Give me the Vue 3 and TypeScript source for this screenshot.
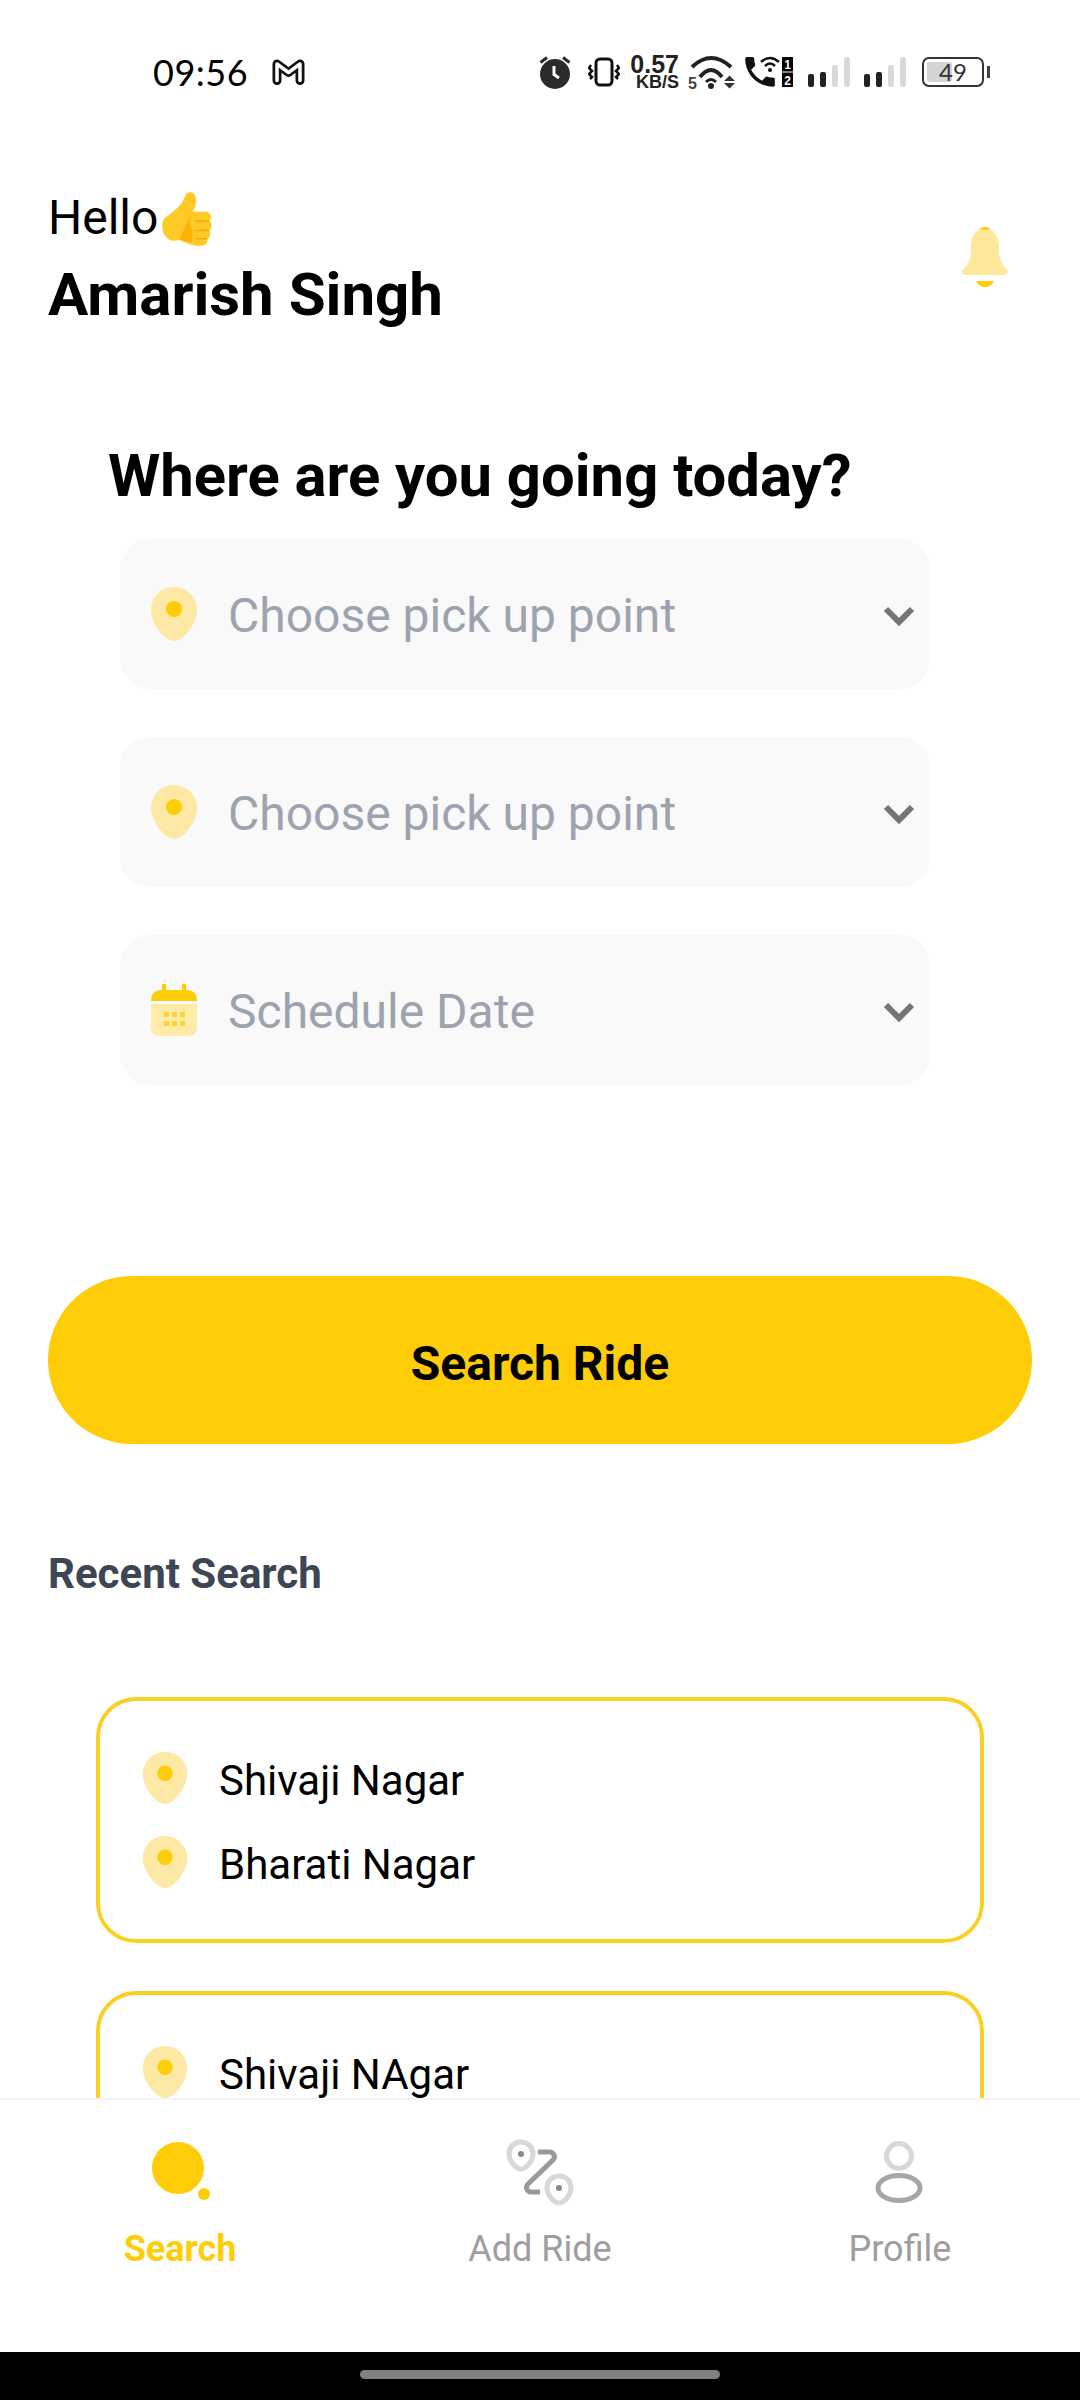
<template>
  <div class="screen">
    <div class="status-bar">
      <span class="time">09:56</span>
      <svg class="gmail" width="33" height="26" viewBox="0 0 33 26">
        <path d="M5 21.500V5L16.500 13.500 28 5V21.500" fill="none" stroke="#111" stroke-width="9" stroke-linejoin="round" stroke-linecap="round" />
        <path d="M5 21.500V5L16.500 13.500 28 5V21.500" fill="none" stroke="#fff" stroke-width="3.500" stroke-linejoin="round" stroke-linecap="round" />
      </svg>
      <div class="status-icons">
        <svg class="st-alarm" width="32" height="34" viewBox="0 0 32 34">
          <circle cx="16" cy="19" r="15" fill="#2b2b2b" />
          <path d="M1.500 7.500 8 2.500M30.500 7.500 24 2.500" stroke="#2b2b2b" stroke-width="3" />
          <path d="M15 11v8.500l5 3.500" fill="none" stroke="#fff" stroke-width="3" />
        </svg>
        <svg class="st-vibrate" width="32" height="30" viewBox="0 0 32 30">
          <rect x="8" y="2" width="16" height="26" rx="4" fill="none" stroke="#111" stroke-width="3" />
          <path d="M3 8 1 11l3 3-3 3 3 3-2 2M29 8l2 3-3 3 3 3-3 3 2 2" fill="none" stroke="#111" stroke-width="2.500" />
        </svg>
        <div class="st-speed">
          <span class="st-speed-val">0.57</span>
          <span class="st-speed-unit">KB/S</span>
        </div>
        <svg class="st-wifi" width="52" height="41" viewBox="-7 0 52 41">
          <path d="M2 12Q21-6 41 12M10 22Q21 8 32 22" fill="none" stroke="#222" stroke-width="4" />
          <path d="M16 27Q21 22 26 27" fill="none" stroke="#222" stroke-width="3" />
          <circle cx="21" cy="31" r="3" fill="#222" />
          <path d="M34 26l5.500-5.500L45 26zM34 28h11l-5.500 5.500z" fill="#333" />
          <text x="-2" y="34" class="st-wifi-five">5</text>
        </svg>
        <svg class="st-call" width="30" height="30" viewBox="3 3 18 18.200">
          <path d="M6.620 10.790c1.440 2.830 3.760 5.140 6.590 6.590l2.200-2.200c.27-.27.670-.36 1.020-.24 1.120.37 2.330.57 3.570.57.550 0 1 .45 1 1V20c0 .55-.45 1-1 1-9.390 0-17-7.610-17-17 0-.55.45-1 1-1h3.500c.55 0 1 .45 1 1 0 1.250.2 2.450.57 3.570.11.35.03.74-.25 1.020l-2.200 2.200z" fill="#111" />
        </svg>
        <svg class="st-callwifi" width="20" height="16" viewBox="0 0 20 16">
          <path d="M1 6Q10-2 19 6M5 10Q10 5 15 10" fill="none" stroke="#111" stroke-width="2.500" />
          <circle cx="10" cy="14" r="2" fill="#111" />
        </svg>
        <svg class="st-sim" width="11" height="30" viewBox="0 0 11 30">
          <rect width="11" height="14.500" fill="#000" />
          <rect y="15.500" width="11" height="14.500" fill="#000" />
          <text x="5.500" y="12" class="st-sim-num">1</text>
          <text x="5.500" y="27.500" class="st-sim-num">2</text>
        </svg>
        <div v-for="s in signalGroups" :key="s" class="st-signal" :class="'st-signal-' + s">
          <i v-for="(bar, i) in signalBars" :key="i" :class="{ off: i > 1 }" :style="{ height: bar + 'px' }"></i>
        </div>
        <div class="st-battery">
          <div class="st-battery-fill"></div>
          <span class="st-battery-val">49</span>
        </div>
        <div class="st-battery-nub"></div>
      </div>
    </div>

    <div class="content">
      <div class="greeting">
        <div>
          <div class="hello">
            Hello<svg class="thumb" width="52" height="56" viewBox="0 0 49 54">
              <path d="M3 26C10 21 20 14 23 4 24 0 32 0 33 6 34 12 32 17 30 20L43 20C48 21 49 26 46 29 49 31 49 36 46 38 48 41 47 45 44 46 45 50 42 53 38 53 30 53 23 50 17 47 10 50 3 46 1 38 0 32 1 28 3 26Z" fill="#FFCA28" />
              <path d="M30 20C27 27 27 34 30 38L29 50C25 49 21 48 17 47 21 38 26 28 30 20Z" fill="#FFB300" />
              <path d="M32 29H46M32 38H46M33 46H44" stroke="#F5A800" stroke-width="1.500" />
            </svg>
          </div>
          <div class="name">Amarish Singh</div>
        </div>
        <svg class="bell soft" width="46" height="62" viewBox="0 0 46 62">
          <path d="M23 3C11 3 9 13 9 24 9 34 6 39 0 45 0 47 2 49 4 49H42C44 49 46 47 46 45 40 39 37 34 37 24 37 13 35 3 23 3Z" fill="#FFE899" />
          <path d="M17 3Q23-1 29 3 23 5 17 3ZM14 55H32Q29 61 23 61 17 61 14 55Z" fill="#FFCD07" />
        </svg>
      </div>

      <h1 class="title">Where are you going today?</h1>

      <div class="form">
        <div v-for="field in fields" :key="field.id" class="field">
          <svg v-if="field.icon === 'pin'" class="field-icon soft" width="46" height="54" viewBox="0 0 46 54">
            <path d="M23 0C36 0 46 10 46 23 46 36 33 54 23 54 13 54 0 36 0 23 0 10 10 0 23 0Z" fill="#FDE9A5" />
            <circle cx="23" cy="22" r="8" fill="#FFCD07" />
          </svg>
          <svg v-else class="field-icon soft" width="46" height="54" viewBox="0 0 46 54">
            <path d="M0 21H46V44Q46 53 37 53H9Q0 53 0 44Z" fill="#FFEBA8" />
            <path d="M0 18Q0 7 11 7H11V1H15V7H31V1H35V7H35Q46 7 46 18Z" fill="#FFCD07" />
            <g fill="#FFD430">
              <rect x="13" y="29" width="5" height="5" />
              <rect x="21" y="29" width="5" height="5" />
              <rect x="29" y="29" width="5" height="5" />
              <rect x="13" y="38" width="5" height="5" />
              <rect x="21" y="38" width="5" height="5" />
              <rect x="29" y="38" width="5" height="5" />
            </g>
          </svg>
          <span class="field-text">{{ field.label }}</span>
          <svg class="chevron" width="32" height="20" viewBox="0 0 32 20">
            <path d="M3 3 16 16 29 3" fill="none" stroke="#757575" stroke-width="6" />
          </svg>
        </div>
      </div>

      <button class="search-btn">Search Ride</button>

      <h2 class="recent-title">Recent Search</h2>

      <div class="cards">
        <div v-for="(card, i) in recent" :key="i" class="card">
          <div v-for="place in card" :key="place" class="card-row">
            <svg class="card-pin soft" width="46" height="52" viewBox="0 0 46 54">
              <path d="M23 0C36 0 46 10 46 23 46 36 33 54 23 54 13 54 0 36 0 23 0 10 10 0 23 0Z" fill="#FDE9A5" />
              <circle cx="23" cy="22" r="8" fill="#FFCD07" />
            </svg>
            <span>{{ place }}</span>
          </div>
        </div>
      </div>
    </div>

    <nav class="tabs">
      <div class="tab active">
        <svg class="tab-icon" width="80" height="80" viewBox="0 0 80 80">
          <circle cx="38" cy="38" r="26" fill="#FFCD07" />
          <circle cx="64" cy="64" r="6" fill="#FFCD07" />
        </svg>
        <span>Search</span>
      </div>
      <div class="tab">
        <svg class="tab-icon soft" width="80" height="80" viewBox="0 0 80 80">
          <g transform="translate(-500 -2130)">
            <path d="M521 2142C528 2142 533 2147 533 2154 533 2161 526 2169 521 2169 516 2169 509 2161 509 2154 509 2147 514 2142 521 2142Z" fill="none" stroke="#d8d8d8" stroke-width="5" />
            <circle cx="521" cy="2154" r="3" fill="#888" />
            <path d="M559 2176C566 2176 571 2181 571 2188 571 2195 564 2203 559 2203 554 2203 547 2195 547 2188 547 2181 552 2176 559 2176Z" fill="none" stroke="#d8d8d8" stroke-width="5" />
            <circle cx="559" cy="2188" r="3" fill="#888" />
            <path d="M538 2152H549C554 2152 556 2157 553 2160L528 2184C525 2187 527 2192 531 2192H540" fill="none" stroke="#999" stroke-width="5" />
          </g>
        </svg>
        <span>Add Ride</span>
      </div>
      <div class="tab">
        <svg class="tab-icon soft" width="80" height="80" viewBox="0 0 80 80">
          <circle cx="39" cy="26" r="12.500" fill="none" stroke="#d8d8d8" stroke-width="5" />
          <ellipse cx="39" cy="58" rx="21" ry="12.500" fill="none" stroke="#a6a6a6" stroke-width="5" />
        </svg>
        <span>Profile</span>
      </div>
    </nav>

    <div class="home-bar">
      <div class="home-handle"></div>
    </div>
  </div>
</template>

<script setup lang="ts">
interface Field {
  id: number
  icon: 'pin' | 'calendar'
  label: string
}

const signalGroups = [1, 2]
const signalBars = [13, 15, 22, 30]

const fields: Field[] = [
  { id: 1, icon: 'pin', label: 'Choose pick up point' },
  { id: 2, icon: 'pin', label: 'Choose pick up point' },
  { id: 3, icon: 'calendar', label: 'Schedule Date' }
]

const recent: string[][] = [
  ['Shivaji Nagar', 'Bharati Nagar'],
  ['Shivaji NAgar']
]
</script>

<style scoped>
.screen {
  display: flex;
  flex-direction: column;
  width: 1080px;
  height: 2400px;
  overflow: hidden;
  background: #fff;
  font-family: Roboto, "Noto Sans", sans-serif;
  color: #000;
}

.soft {
  filter: blur(0.7px);
}

/* status bar */
.status-bar {
  flex: none;
  display: flex;
  align-items: center;
  height: 144px;
  padding: 0 0 0 153px;
  box-sizing: border-box;
}

.time {
  font-family: Lato, sans-serif;
  font-size: 36px;
  line-height: 36px;
  letter-spacing: 0.5px;
}

.gmail {
  margin-left: 24px;
}

.status-icons {
  display: flex;
  align-items: center;
  margin-left: 234px;
  height: 36px;
}

.st-vibrate {
  margin-left: 17px;
}

.st-speed {
  display: flex;
  flex-direction: column;
  align-items: flex-end;
  width: 50px;
  margin-left: 9px;
  font-family: "Liberation Sans", sans-serif;
  color: #222;
}

.st-speed-val {
  font-size: 25px;
  line-height: 20px;
  font-weight: 700;
}

.st-speed-unit {
  font-size: 18px;
  line-height: 16px;
  font-weight: 700;
}

.st-wifi {
  margin: 6px 0 0 4px;
}

.st-wifi-five {
  font-family: "Liberation Sans", sans-serif;
  font-size: 16px;
  font-weight: 700;
  fill: #444;
}

.st-call {
  margin-left: 10px;
}

.st-callwifi {
  margin-left: -15px;
  margin-bottom: 16px;
}

.st-sim {
  margin-left: 2px;
}

.st-sim-num {
  font-family: "Liberation Sans", sans-serif;
  font-size: 12px;
  font-weight: 700;
  fill: #fff;
  text-anchor: middle;
}

.st-signal {
  display: flex;
  align-items: flex-end;
  gap: 6px;
  height: 30px;
}

.st-signal-1 {
  margin-left: 15px;
}

.st-signal-2 {
  margin-left: 14px;
}

.st-signal i {
  display: block;
  width: 6px;
  background: #222;
  border-radius: 2px;
}

.st-signal i.off {
  background: #d9d9d9;
}

.st-battery {
  position: relative;
  display: flex;
  align-items: center;
  justify-content: center;
  width: 62px;
  height: 30px;
  margin-left: 16px;
  box-sizing: border-box;
  border: 2px solid #333;
  border-radius: 7px;
}

.st-battery-fill {
  position: absolute;
  top: 3px;
  bottom: 3px;
  left: 3px;
  width: 25px;
  background: #d4d4d4;
  border-radius: 2px;
}

.st-battery-val {
  position: relative;
  font-family: Lato, sans-serif;
  font-size: 24px;
  line-height: 24px;
  color: #333;
}

.st-battery-nub {
  width: 3px;
  height: 12px;
  margin-left: 3px;
  background: #444;
}

/* main content */
.content {
  flex: 1;
  min-height: 0;
  overflow: hidden;
}

.greeting {
  display: flex;
  align-items: center;
  justify-content: space-between;
  margin-top: 42px;
  padding: 0 72px 0 48px;
}

.hello {
  display: flex;
  align-items: center;
  height: 64px;
  font-size: 48px;
  line-height: 64px;
}

.thumb {
  margin: 2px 0 0 3px;
}

.name {
  margin-top: 11px;
  font-size: 60px;
  line-height: 68px;
  font-weight: 700;
}

.bell {
  margin-top: -2px;
}

.title {
  margin: 114px 0 0 108px;
  font-size: 59.800px;
  line-height: 66px;
  font-weight: 700;
}

.form {
  display: flex;
  flex-direction: column;
  gap: 48px;
  width: 810px;
  margin: 30px 0 0 120px;
}

.field {
  display: flex;
  align-items: center;
  height: 150px;
  padding: 0 15px 0 31px;
  box-sizing: border-box;
  background: #f9f9f9;
  border-radius: 30px;
}

.field-text {
  flex: 1;
  margin-left: 31px;
  padding-top: 3px;
  font-size: 48px;
  color: #9ca3af;
}

.chevron {
  flex: none;
  margin-top: 3px;
}

.search-btn {
  display: block;
  width: 984px;
  height: 168px;
  margin: 191px 0 0 48px;
  padding: 6px 0 0;
  border: none;
  border-radius: 84px;
  background: #ffcd07;
  font-family: inherit;
  font-size: 48px;
  font-weight: 700;
  color: #000;
}

.recent-title {
  margin: 105px 0 0 48px;
  font-size: 42px;
  line-height: 50px;
  font-weight: 700;
  color: #3d4654;
}

.cards {
  display: flex;
  flex-direction: column;
  gap: 48px;
  margin: 98px 96px 0;
}

.card {
  display: flex;
  flex-direction: column;
  gap: 32px;
  height: 246px;
  padding: 51px 0 0 42px;
  box-sizing: border-box;
  border: 4px solid #fbd026;
  border-radius: 40px;
}

.card-row {
  display: flex;
  align-items: center;
  gap: 31px;
  height: 52px;
  font-size: 42px;
}

.card-row span {
  position: relative;
  top: 2px;
}

/* bottom tabs */
.tabs {
  flex: none;
  display: grid;
  grid-template-columns: repeat(3, 1fr);
  height: 254px;
  box-sizing: border-box;
  border-top: 2px solid #f5f5f5;
  background: #fff;
}

.tab {
  display: flex;
  flex-direction: column;
  align-items: center;
  padding-top: 30px;
  font-size: 36px;
  line-height: 42px;
  color: #9e9e9e;
}

.tab.active {
  color: #ffcd07;
  font-weight: 700;
}

.tab-icon {
  margin-bottom: 18px;
}

.home-bar {
  flex: none;
  height: 48px;
  padding-top: 18px;
  box-sizing: border-box;
  background: #000;
}

.home-handle {
  width: 360px;
  height: 9px;
  margin: 0 auto;
  border-radius: 5px;
  background: #808080;
}
</style>
